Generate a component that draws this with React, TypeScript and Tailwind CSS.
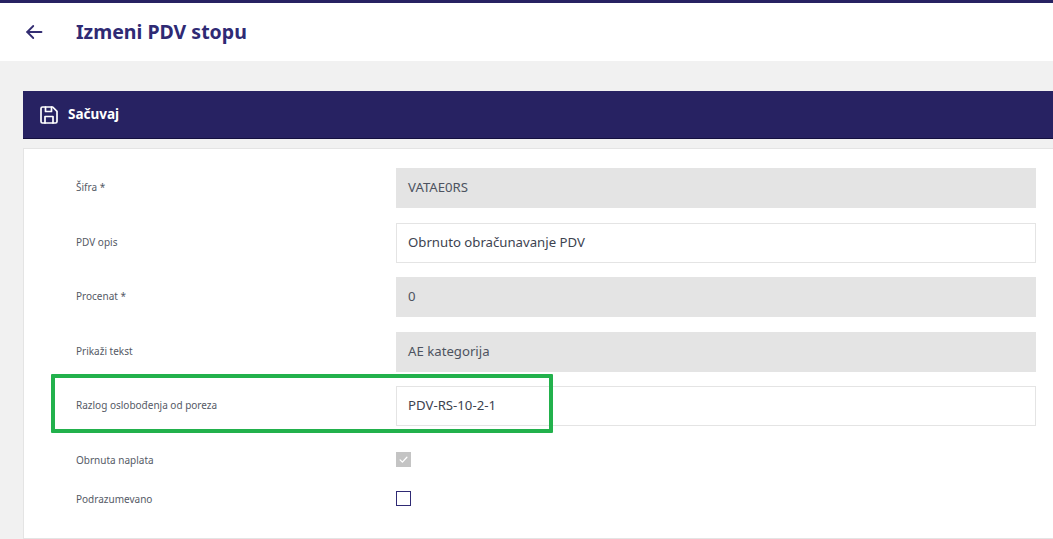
import React from "react";

const font = { fontFamily: '"Noto Sans", sans-serif' };

function Row({ label, value, disabled, mt }: { label: string; value: string; disabled?: boolean; mt: string }) {
  return (
    <div className={`flex items-center h-[40px] ${mt}`}>
      <div className="w-[349px] shrink-0 pl-[29px] text-[10px] text-[#555a66] leading-none -mt-[3px]">{label}</div>
      <div
        className={`flex-1 h-full flex items-center text-[13.2px] ${
          disabled ? "bg-[#e4e4e4] text-[#4d5360] pl-[12px]" : "bg-white border border-[#e4e4e4] pl-[11px] text-[#3d4350]"
        }`}
      >
        {value}
      </div>
    </div>
  );
}

export default function App() {
  return (
    <div className="relative w-[1053px] h-[539px] overflow-hidden bg-[#f1f1f1]" style={font}>
      <header className="h-[61px] bg-white border-t-[3px] border-[#272262] flex items-center pl-[25px]">
        <svg width="18" height="18" viewBox="0 0 24 24" fill="none" stroke="#332d72" strokeWidth="2.4" strokeLinecap="round" strokeLinejoin="round">
          <path d="M22 12H3" />
          <path d="M11 4l-8 8 8 8" />
        </svg>
        <h1 className="ml-[33px] text-[19.5px] font-bold text-[#2f2a74] leading-none">Izmeni PDV stopu</h1>
      </header>

      <div className="pl-[23px] pt-[30px]">
        <div className="h-[48px] bg-[#272262] border-b border-[#14103f] flex items-center pl-[17px]">
          <svg width="18" height="18" viewBox="0 0 18 18" fill="none" stroke="#ffffff" strokeWidth="1.7" strokeLinecap="round" strokeLinejoin="round">
            <path d="M2.5 1h10.2L17 5.3v10.2a1.5 1.5 0 0 1-1.5 1.5h-13A1.5 1.5 0 0 1 1 15.5v-13A1.5 1.5 0 0 1 2.5 1z" />
            <path d="M5 17v-6.5h8V17" />
            <path d="M5.5 1v4.5h6V1" />
          </svg>
          <span className="ml-[10px] text-[13.5px] font-bold text-white">Sačuvaj</span>
        </div>

        <div className="mt-[9px] h-[391px] bg-white border-t border-b border-l border-[#e4e4e4] pt-[19px] pl-[23px] pr-[17px]">
          <Row label="Šifra *" value="VATAE0RS" disabled mt="" />
          <Row label="PDV opis" value="Obrnuto obračunavanje PDV" mt="mt-[15px]" />
          <Row label="Procenat *" value="0" disabled mt="mt-[14px]" />
          <Row label="Prikaži tekst" value="AE kategorija" disabled mt="mt-[15px]" />
          <Row label="Razlog oslobođenja od poreza" value="PDV-RS-10-2-1" mt="mt-[14px]" />

          <div className="flex items-center h-[15px] mt-[26px]">
            <div className="w-[349px] shrink-0 pl-[29px] text-[10px] text-[#555a66] leading-none mt-[1px]">Obrnuta naplata</div>
            <div className="w-[15px] h-[15px] bg-[#c4c4c4] flex items-center justify-center">
              <svg width="9" height="9" viewBox="0 0 24 24" fill="none" stroke="#ffffff" strokeWidth="3.5" strokeLinecap="round" strokeLinejoin="round">
                <path d="M3 13l6 6L21 6" />
              </svg>
            </div>
          </div>
          <div className="flex items-center h-[15px] mt-[24px]">
            <div className="w-[349px] shrink-0 pl-[29px] text-[10px] text-[#555a66] leading-none mt-[1px]">Podrazumevano</div>
            <div className="w-[15px] h-[15px] bg-white border border-[#2f2a74]" />
          </div>
        </div>
      </div>

      <div className="absolute left-[51px] top-[374px] w-[502px] h-[59px] border-[4px] border-[#22b14c] rounded-[1px]" />
    </div>
  );
}
